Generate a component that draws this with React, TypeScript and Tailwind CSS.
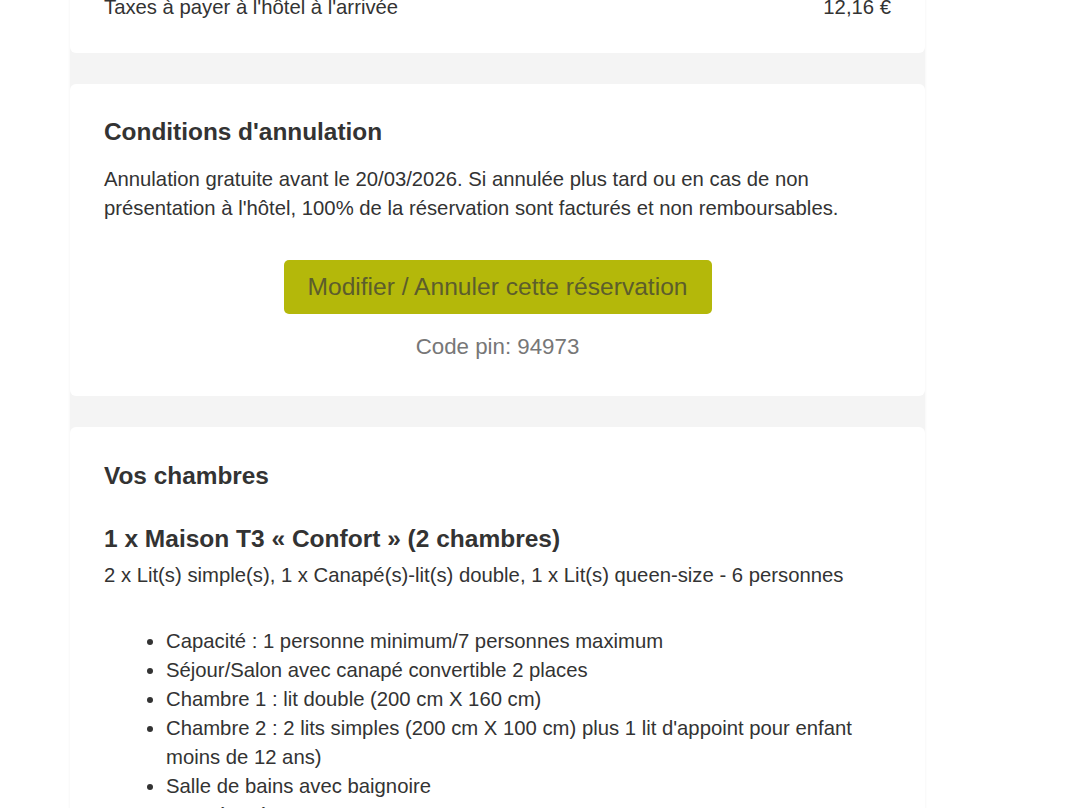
import React from 'react';

const items: string[] = [
  'Capacité : 1 personne minimum/7 personnes maximum',
  'Séjour/Salon avec canapé convertible 2 places',
  'Chambre 1 : lit double (200 cm X 160 cm)',
  "Chambre 2 : 2 lits simples (200 cm X 100 cm) plus 1 lit d'appoint pour enfant moins de 12 ans)",
  'Salle de bains avec baignoire',
  'WC séparés',
];

const App: React.FC = () => {
  return (
    <div className="h-[808px] overflow-hidden bg-white font-['Liberation_Sans',Arial,sans-serif] text-[#333]">
      <div className="ml-[70px] w-[855px] -mt-[7px] bg-[#f4f4f4] shadow-[0_0_3px_rgba(0,0,0,0.06)] flex flex-col gap-[31px]">
        {/* Prix */}
        <div className="bg-white rounded-b-md px-[34px] pb-[31px]">
          <div className="flex justify-between text-[20.3px] leading-[29px]">
            <span>Taxes à payer à l'hôtel à l'arrivée</span>
            <span>12,16 €</span>
          </div>
        </div>

        {/* Conditions */}
        <div className="bg-white rounded-md px-[34px] pt-[35px] pb-[35px]">
          <h3 className="text-[24.4px] leading-[26px] font-bold">Conditions d'annulation</h3>
          <p className="mt-[20px] text-[20.3px] leading-[29px]">
            Annulation gratuite avant le 20/03/2026. Si annulée plus tard ou en cas de non présentation à l'hôtel, 100% de la réservation sont facturés et non remboursables.
          </p>
          <div className="mt-[37px] flex flex-col items-center">
            <button className="w-[428px] h-[54px] rounded-[5px] bg-[#b4b80a] text-[#5c5d2c] text-[24.6px]">
              Modifier / Annuler cette réservation
            </button>
            <div className="mt-[19px] text-[22.3px] leading-[28px] text-[#777]">Code pin: 94973</div>
          </div>
        </div>

        {/* Chambres */}
        <div className="bg-white rounded-md px-[34px] pt-[36px] pb-[34px]">
          <h3 className="text-[24.4px] leading-[26px] font-bold">Vos chambres</h3>
          <h4 className="mt-[36px] text-[24.5px] leading-[28px] font-bold">1 x Maison T3 « Confort » (2 chambres)</h4>
          <p className="mt-[8px] text-[20.3px] leading-[29px]">
            2 x Lit(s) simple(s), 1 x Canapé(s)-lit(s) double, 1 x Lit(s) queen-size - 6 personnes
          </p>
          <ul className="mt-[37px] pl-[62px] pr-[30px] list-disc text-[20.3px] leading-[29px]">
            {items.map((it) => (
              <li key={it}>{it}</li>
            ))}
          </ul>
        </div>
      </div>
    </div>
  );
};

export default App;
